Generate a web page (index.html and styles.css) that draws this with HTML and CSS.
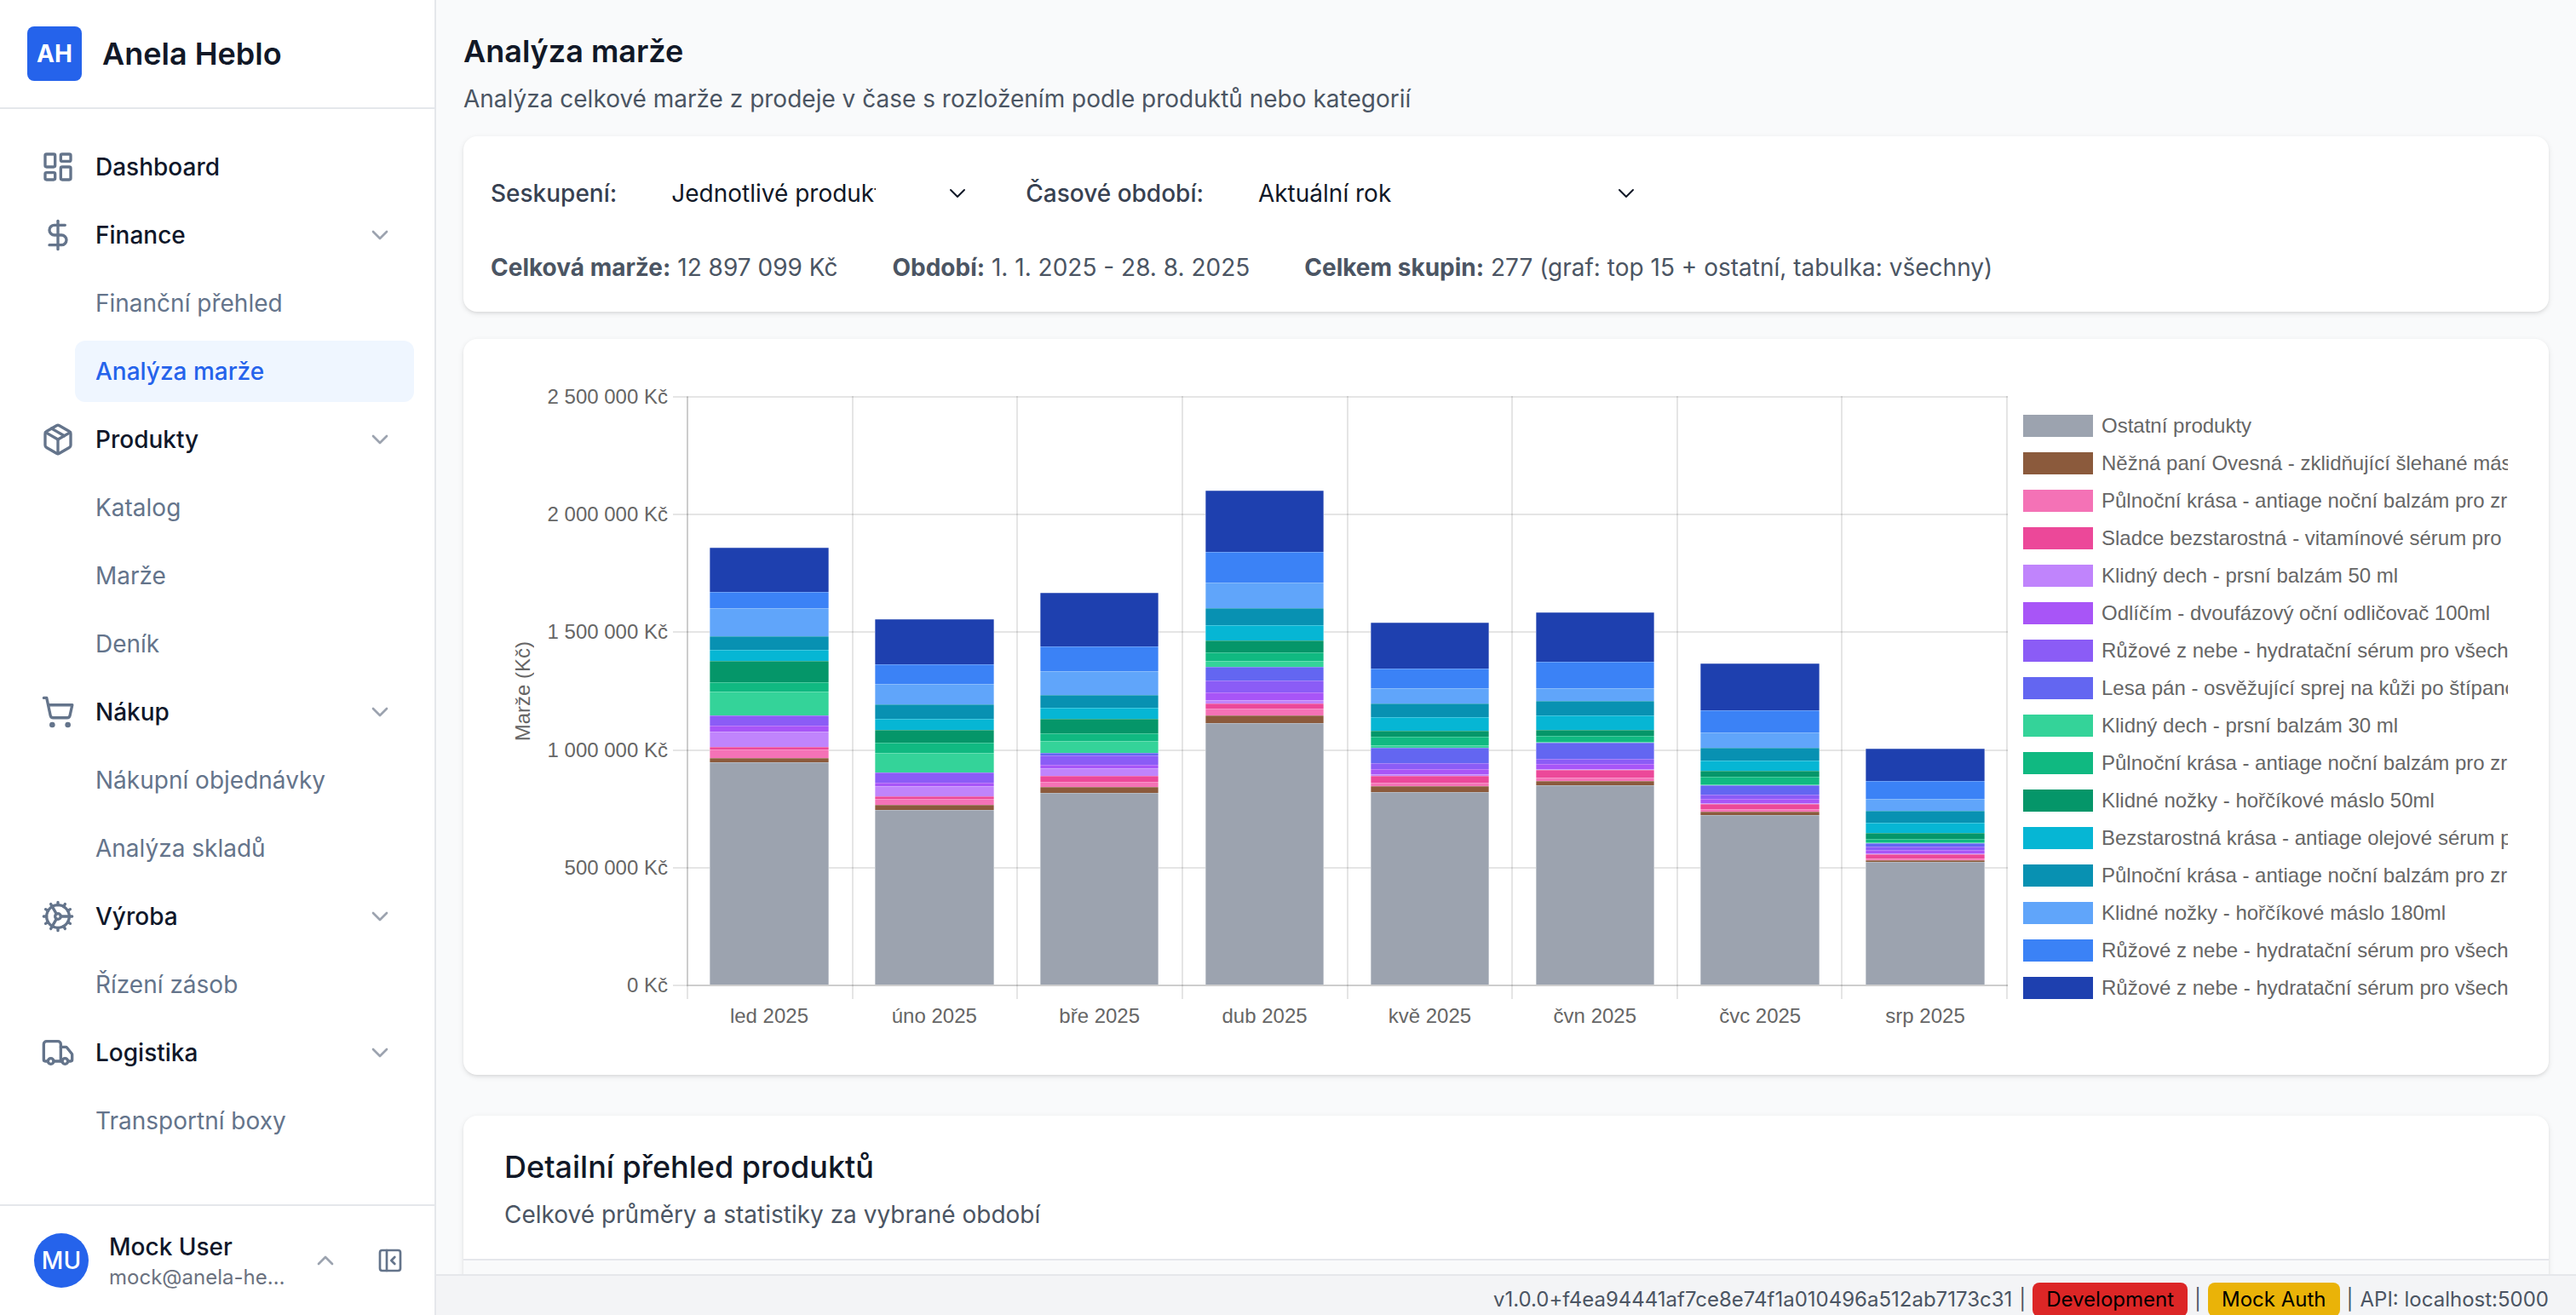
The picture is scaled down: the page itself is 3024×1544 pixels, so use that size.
FILE: index.html
```html
<!DOCTYPE html>
<html lang="cs">
<head>
<meta charset="utf-8">
<title>Anela Heblo</title>
<link rel="stylesheet" href="styles.css">
</head>
<body>
<svg class="sprite" aria-hidden="true">
  <symbol id="i-dashboard" viewBox="0 0 24 24"><rect x="3" y="3" width="7" height="9" rx="1"/><rect x="14" y="3" width="7" height="5" rx="1"/><rect x="14" y="12" width="7" height="9" rx="1"/><rect x="3" y="16" width="7" height="5" rx="1"/></symbol>
  <symbol id="i-dollar" viewBox="0 0 24 24"><path d="M12 2v20"/><path d="M17 5H9.5a3.5 3.5 0 0 0 0 7h5a3.5 3.5 0 0 1 0 7H6"/></symbol>
  <symbol id="i-package" viewBox="0 0 24 24"><path d="m7.5 4.27 9 5.15"/><path d="M21 8a2 2 0 0 0-1-1.73l-7-4a2 2 0 0 0-2 0l-7 4A2 2 0 0 0 3 8v8a2 2 0 0 0 1 1.73l7 4a2 2 0 0 0 2 0l7-4A2 2 0 0 0 21 16Z"/><path d="m3.3 7 8.7 5 8.7-5"/><path d="M12 22V12"/></symbol>
  <symbol id="i-cart" viewBox="0 0 24 24"><circle cx="8" cy="21" r="1"/><circle cx="19" cy="21" r="1"/><path d="M2.05 2.05h2l2.66 12.42a2 2 0 0 0 2 1.58h9.78a2 2 0 0 0 1.95-1.57l1.65-7.43H5.12"/></symbol>
  <symbol id="i-cog" viewBox="0 0 24 24"><circle cx="12" cy="12" r="8"/><circle cx="12" cy="12" r="2"/><path d="M12 2v2M12 22v-2M17 20.66l-1-1.73M11 10.27 7 3.34M20.66 17l-1.73-1M3.34 7l1.73 1M14 12h8M2 12h2M20.66 7l-1.73 1M3.34 17l1.73-1M17 3.34l-1 1.73M11 13.73l-4 6.93"/></symbol>
  <symbol id="i-truck" viewBox="0 0 24 24"><path d="M14 18V6a2 2 0 0 0-2-2H4a2 2 0 0 0-2 2v11a1 1 0 0 0 1 1h2"/><path d="M15 18H9"/><path d="M19 18h2a1 1 0 0 0 1-1v-3.65a1 1 0 0 0-.22-.624l-3.48-4.35A1 1 0 0 0 17.52 8H14"/><circle cx="17" cy="18" r="2"/><circle cx="7" cy="18" r="2"/></symbol>
  <symbol id="i-down" viewBox="0 0 24 24"><path d="m6 9 6 6 6-6"/></symbol>
  <symbol id="i-up" viewBox="0 0 24 24"><path d="m18 15-6-6-6 6"/></symbol>
  <symbol id="i-panel" viewBox="0 0 24 24"><rect x="3" y="3" width="18" height="18" rx="2"/><path d="M9 3v18"/><path d="m16 15-3-3 3-3"/></symbol>
</svg>
<div class="app">
  <aside class="sidebar">
    <header class="brand">
      <span class="brand-logo">AH</span>
      <span class="brand-name">Anela Heblo</span>
    </header>
    <nav class="nav">
      <a class="nav-item" href="#"><svg class="icon"><use href="#i-dashboard"/></svg>Dashboard</a>
      <button class="nav-item" type="button"><svg class="icon"><use href="#i-dollar"/></svg>Finance<svg class="chevron"><use href="#i-down"/></svg></button>
      <a class="nav-sub" href="#">Finanční přehled</a>
      <a class="nav-sub active" href="#" aria-current="page">Analýza marže</a>
      <button class="nav-item" type="button"><svg class="icon"><use href="#i-package"/></svg>Produkty<svg class="chevron"><use href="#i-down"/></svg></button>
      <a class="nav-sub" href="#">Katalog</a>
      <a class="nav-sub" href="#">Marže</a>
      <a class="nav-sub" href="#">Deník</a>
      <button class="nav-item" type="button"><svg class="icon"><use href="#i-cart"/></svg>Nákup<svg class="chevron"><use href="#i-down"/></svg></button>
      <a class="nav-sub" href="#">Nákupní objednávky</a>
      <a class="nav-sub" href="#">Analýza skladů</a>
      <button class="nav-item" type="button"><svg class="icon"><use href="#i-cog"/></svg>Výroba<svg class="chevron"><use href="#i-down"/></svg></button>
      <a class="nav-sub" href="#">Řízení zásob</a>
      <button class="nav-item" type="button"><svg class="icon"><use href="#i-truck"/></svg>Logistika<svg class="chevron"><use href="#i-down"/></svg></button>
      <a class="nav-sub" href="#">Transportní boxy</a>
    </nav>
    <div class="account">
      <button class="user" type="button">
        <span class="avatar">MU</span>
        <span class="user-text"><span class="user-name">Mock User</span><span class="user-mail">mock@anela-heblo.com</span></span>
        <svg class="chevron"><use href="#i-up"/></svg>
      </button>
      <button class="collapse" type="button" aria-label="Sbalit panel"><svg class="icon-small"><use href="#i-panel"/></svg></button>
    </div>
  </aside>
  <div class="page">
    <main class="content">
      <header class="page-head">
        <h1 class="title">Analýza marže</h1>
        <p class="subtitle">Analýza celkové marže z prodeje v čase s rozložením podle produktů nebo kategorií</p>
      </header>
      <section class="card filters">
        <form class="controls">
          <div class="field">
            <label for="grouping">Seskupení:</label>
            <div class="select-wrap select-narrow"><select id="grouping"><option>Jednotlivé produkty</option></select><svg class="select-arrow" viewBox="0 0 20 20"><path d="m2 6 8 8 8-8"/></svg></div>
          </div>
          <div class="field">
            <label for="period">Časové období:</label>
            <div class="select-wrap select-wide"><select id="period"><option>Aktuální rok</option></select><svg class="select-arrow" viewBox="0 0 20 20"><path d="m2 6 8 8 8-8"/></svg></div>
          </div>
        </form>
        <div class="stats">
          <span><strong>Celková marže:</strong> 12 897 099 Kč</span>
          <span><strong>Období:</strong> 1. 1. 2025 - 28. 8. 2025</span>
          <span><strong>Celkem skupin:</strong> 277 (graf: top 15 + ostatní, tabulka: všechny)</span>
        </div>
      </section>
      <section class="card chart">
        <div class="y-title"><span>Marže (Kč)</span></div>
        <div class="y-labels"><span>2 500 000 Kč</span><span>2 000 000 Kč</span><span>1 500 000 Kč</span><span>1 000 000 Kč</span><span>500 000 Kč</span><span>0 Kč</span></div>
        <div class="plot">
          <div class="h-lines"><i></i><i></i><i></i><i></i><i></i><i></i></div>
          <div class="v-lines"><i></i><i></i><i></i><i></i><i></i><i></i><i></i><i></i><i></i></div>
          <div class="bars" id="bars"></div>
        </div>
        <div class="x-labels" id="months"></div>
        <ul class="legend" id="legend"></ul>
      </section>
      <section class="card detail">
        <header class="detail-head">
          <h2 class="detail-title">Detailní přehled produktů</h2>
          <p class="subtitle">Celkové průměry a statistiky za vybrané období</p>
        </header>
        <div class="detail-columns"></div>
      </section>
    </main>
    <footer class="status">
      <span>v1.0.0+f4ea94441af7ce8e74f1a010496a512ab7173c31</span>
      <span>|</span>
      <span class="badge badge-red">Development</span>
      <span>|</span>
      <span class="badge badge-yellow">Mock Auth</span>
      <span>|</span>
      <span>API: localhost:5000</span>
    </footer>
  </div>
</div>
<script src="chart.js"></script>
</body>
</html>
```
FILE: styles.css
```css
*, *::before, *::after { box-sizing: border-box; }
body, h1, h2, p, ul { margin: 0; padding: 0; }
body {
  font-family: Inter, "Liberation Sans", sans-serif;
  font-size: 28px;
  line-height: 40px;
  color: #0f172a;
  background: #f9fafb;
}
button, select { font: inherit; color: inherit; background: none; border: 0; margin: 0; padding: 0; text-align: left; }
a { color: inherit; text-decoration: none; }
svg { fill: none; stroke: currentColor; stroke-width: 2; stroke-linecap: round; stroke-linejoin: round; flex: none; }
.sprite { display: none; }

.app { display: flex; height: 100vh; overflow: hidden; }

/* Sidebar */
.sidebar { flex: none; width: 512px; display: flex; flex-direction: column; background: #fff; border-right: 2px solid #e5e7eb; }
.brand { display: flex; align-items: center; gap: 24px; height: 128px; padding: 0 32px; border-bottom: 2px solid #e5e7eb; }
.brand-logo { display: grid; place-items: center; width: 64px; height: 64px; border-radius: 8px; background: #2563eb; color: #fff; font-weight: 700; }
.brand-name { font-size: 36px; font-weight: 600; color: #111827; }
.nav { flex: 1; display: flex; flex-direction: column; gap: 8px; padding: 32px 24px; }
.nav-item, .nav-sub { display: flex; align-items: center; height: 72px; padding: 0 24px; border-radius: 12px; }
.nav-item { gap: 24px; font-weight: 500; }
.nav-sub { margin-left: 64px; color: #64748b; }
.active { background: #eff6ff; color: #2563eb; font-weight: 500; }
.icon { width: 40px; height: 40px; color: #64748b; }
.chevron { width: 32px; height: 32px; margin-left: auto; color: #9ca3af; }
.account { display: flex; align-items: center; gap: 36px; height: 130px; padding: 0 28px 0 40px; border-top: 2px solid #e5e7eb; }
.user { flex: 1; min-width: 0; display: flex; align-items: center; gap: 24px; }
.avatar { flex: none; display: grid; place-items: center; width: 64px; height: 64px; border-radius: 50%; background: #2563eb; color: #fff; font-weight: 500; }
.user-text { flex: 1; min-width: 0; display: flex; flex-direction: column; }
.user-name { font-weight: 500; }
.user-mail { font-size: 24px; line-height: 32px; color: #6b7280; overflow: hidden; text-overflow: ellipsis; white-space: nowrap; }
.collapse { display: grid; padding: 8px; color: #64748b; }
.icon-small { width: 32px; height: 32px; }

/* Page */
.page { flex: 1; min-width: 0; display: flex; flex-direction: column; }
.content { flex: 1; min-height: 0; overflow: hidden; padding: 32px 32px 0; }
.page-head { margin-bottom: 24px; }
.title { font-size: 36px; line-height: 56px; font-weight: 600; color: #111827; }
.subtitle { margin-top: 8px; color: #4b5563; }
.card { background: #fff; border-radius: 16px; box-shadow: 0 2px 6px rgba(0, 0, 0, .1), 0 2px 4px -2px rgba(0, 0, 0, .1); }

.filters { padding: 32px; margin-bottom: 32px; }
.controls { display: flex; gap: 48px; margin-bottom: 32px; }
.field { display: flex; align-items: center; gap: 16px; height: 70px; font-weight: 500; color: #374151; }
.select-wrap { display: grid; align-items: center; }
.select-narrow { width: 416px; }
.select-wide { width: 512px; }
.select-wrap > * { grid-area: 1 / 1; }
.select-wrap select { appearance: none; width: 100%; height: 70px; padding: 0 128px 0 48px; font-weight: 400; color: #111827; }
.select-arrow { width: 20px; height: 20px; justify-self: end; margin-right: 22px; color: #111827; pointer-events: none; }
.stats { display: flex; gap: 64px; color: #4b5563; }
.stats strong { font-weight: 700; }

/* Chart */
.chart {
  display: grid;
  grid-template-columns: 44px 148px 22px minmax(0, 1fr) 18px 569px;
  grid-template-rows: 691px 57px;
  padding: 68px 48px 48px;
  margin-bottom: 48px;
  font-family: "Liberation Sans", Arial, sans-serif;
  font-size: 24px;
  line-height: 28px;
  color: #666;
}
.y-title { grid-area: 1 / 1; display: grid; place-items: center; }
.y-title span { writing-mode: vertical-rl; rotate: 180deg; }
.y-labels { grid-area: 1 / 2; display: flex; flex-direction: column; justify-content: space-between; margin: -14px 0; text-align: right; white-space: nowrap; }
.plot { grid-area: 1 / 4; display: grid; }
.plot > * { grid-area: 1 / 1; display: grid; }
.h-lines { grid-template-rows: repeat(5, 1fr) 2px; margin: -1px 0 -1px -16px; }
.h-lines i { border-top: 2px solid rgba(0, 0, 0, .1); }
.v-lines { grid-template-columns: repeat(8, 1fr) 2px; margin: -1px 0 -16px; }
.v-lines i { border-left: 2px solid rgba(0, 0, 0, .1); }
.bars { grid-template-columns: repeat(8, 1fr); margin-bottom: -1px; box-shadow: inset 2px 0 rgba(0, 0, 0, .1); border-bottom: 2px solid rgba(0, 0, 0, .1); }
.bar { display: flex; flex-direction: column; justify-content: flex-end; align-items: center; }
.seg { flex: none; width: 72%; box-shadow: inset 0 1px rgba(255, 255, 255, .25), inset 1px 0 rgba(255, 255, 255, .35), inset -1px 0 rgba(255, 255, 255, .35); }
.x-labels { grid-area: 2 / 4; display: grid; grid-template-columns: repeat(8, 1fr); padding-top: 22px; text-align: center; }
.legend { grid-area: 1 / 6 / 3; list-style: none; padding-top: 12px; }
.legend li { display: flex; align-items: center; gap: 10px; height: 44px; overflow: hidden; white-space: nowrap; }
.swatch { flex: none; width: 82px; height: 26px; }

.s0 { background: #9ca3af; }
.s1 { background: #8b5a3c; }
.s2 { background: #f472b6; }
.s3 { background: #ec4899; }
.s4 { background: #c084fc; }
.s5 { background: #a855f7; }
.s6 { background: #8b5cf6; }
.s7 { background: #6366f1; }
.s8 { background: #34d399; }
.s9 { background: #10b981; }
.s10 { background: #059669; }
.s11 { background: #06b6d4; }
.s12 { background: #0891b2; }
.s13 { background: #60a5fa; }
.s14 { background: #3b82f6; }
.s15 { background: #1e40af; }

/* Detail */
.detail-head { padding: 32px 48px; border-bottom: 2px solid #e5e7eb; }
.detail-title { font-size: 36px; line-height: 56px; font-weight: 500; color: #111827; }
.detail-columns { height: 80px; background: #f9fafb; }

/* Status bar */
.status {
  flex: none;
  display: flex;
  justify-content: flex-end;
  gap: 8px;
  height: 48px;
  padding: 8px 32px 0;
  overflow: hidden;
  white-space: nowrap;
  border-top: 2px solid #e5e7eb;
  background: #f3f4f6;
  font-size: 24px;
  line-height: 40px;
  color: #4b5563;
}
.badge { flex: none; height: 40px; padding: 0 16px; border-radius: 8px; color: #000; }
.badge-red { background: #dc2626; }
.badge-yellow { background: #eab308; }
```
FILE: chart.js
```js
const products = [
  'Ostatní produkty',
  'Něžná paní Ovesná - zklidňující šlehané máslo',
  'Půlnoční krása - antiage noční balzám pro zralou',
  'Sladce bezstarostná - vitamínové sérum pro',
  'Klidný dech - prsní balzám 50 ml',
  'Odlíčím - dvoufázový oční odličovač 100ml',
  'Růžové z nebe - hydratační sérum pro všechny',
  'Lesa pán - osvěžující sprej na kůži po štípanci',
  'Klidný dech - prsní balzám 30 ml',
  'Půlnoční krása - antiage noční balzám pro zralou',
  'Klidné nožky - hořčíkové máslo 50ml',
  'Bezstarostná krása - antiage olejové sérum pro',
  'Půlnoční krása - antiage noční balzám pro zralou',
  'Klidné nožky - hořčíkové máslo 180ml',
  'Růžové z nebe - hydratační sérum pro všechny',
  'Růžové z nebe - hydratační sérum pro všechny'
];

// Margin per month, from the last product to the first; the axis maximum is SCALE.
const SCALE = 691;
const months = [
  ['led 2025', [52, 19, 33, 16, 13, 25, 11, 28, 0, 13, 7, 18, 3, 10, 5, 261]],
  ['úno 2025', [53, 23, 24, 17, 13, 15, 13, 23, 0, 12, 4, 12, 3, 7, 6, 205]],
  ['bře 2025', [63, 29, 28, 15, 13, 17, 10, 14, 3, 11, 4, 9, 7, 6, 7, 225]],
  ['dub 2025', [72, 36, 30, 20, 18, 14, 10, 7, 16, 14, 9, 4, 7, 8, 9, 307]],
  ['kvě 2025', [54, 23, 18, 16, 16, 8, 10, 3, 18, 7, 6, 2, 8, 4, 7, 226]],
  ['čvn 2025', [58, 31, 15, 17, 17, 7, 8, 1, 19, 6, 6, 1, 9, 4, 5, 234]],
  ['čvc 2025', [55, 26, 18, 15, 13, 7, 9, 1, 11, 5, 5, 1, 6, 3, 4, 199]],
  ['srp 2025', [38, 22, 14, 14, 12, 7, 4, 1, 4, 4, 4, 1, 5, 2, 2, 144]]
];

document.getElementById('bars').innerHTML = months.map(([, values]) =>
  '<div class="bar">' + values.map((v, i) =>
    `<div class="seg s${15 - i}" style="height:${v / SCALE * 100}%"></div>`).join('') + '</div>').join('');
document.getElementById('months').innerHTML = months.map(([name]) => `<span>${name}</span>`).join('');
document.getElementById('legend').innerHTML = products.map((name, i) =>
  `<li><span class="swatch s${i}"></span>${name}</li>`).join('');
```
